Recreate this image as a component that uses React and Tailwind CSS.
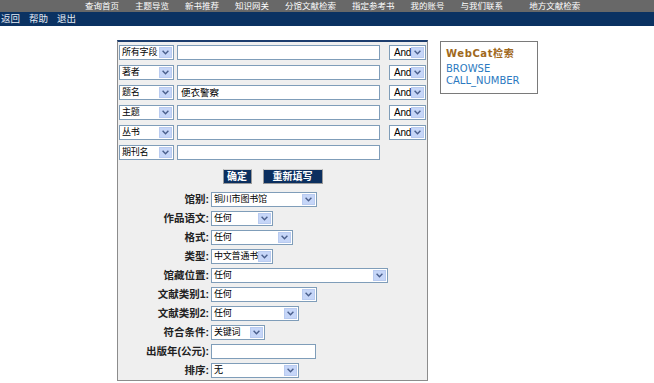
import React from 'react';

const cjk = "font-['Liberation_Sans','Noto_Sans_CJK_SC',sans-serif]";

// dropdown button used by every fake select
function Arrow() {
  return (
    <span className="flex h-full w-[13px] shrink-0 items-center justify-center border border-[#b9cbf0] bg-[#c6d6f8]">
      <svg width="7" height="5" viewBox="0 0 7 5">
        <path d="M0.6 0.8 L3.5 3.8 L6.4 0.8" stroke="#4a5f8c" strokeWidth="1.4" fill="none" />
      </svg>
    </span>
  );
}

function Select({ value, className }) {
  return (
    <div className={`flex h-[15px] items-center border border-[#7f9db9] bg-white p-[1px] ${className}`}>
      <span className="flex-1 whitespace-nowrap pl-[1px] text-[9px] leading-none tracking-[-0.2px] text-black">{value}</span>
      <Arrow />
    </div>
  );
}

function Input({ value = '', className }) {
  return (
    <div className={`flex h-[15px] items-center border border-[#7f9db9] bg-white pl-[3px] text-[9.5px] leading-none ${className}`}>
      {value}
    </div>
  );
}

const navItems = ['查询首页', '主题导览', '新书推荐', '知识网关', '分馆文献检索', '指定参考书', '我的账号', '与我们联系'];

const fieldRows = [
  { field: '所有字段', value: '', and: true },
  { field: '著者', value: '', and: true },
  { field: '题名', value: '便衣警察', and: true },
  { field: '主题', value: '', and: true },
  { field: '丛书', value: '', and: true },
  { field: '期刊名', value: '', and: false },
];

const filterRows = [
  { label: '馆别:', control: <Select value="铜川市图书馆" className="w-[106px]" /> },
  { label: '作品语文:', control: <Select value="任何" className="w-[62px]" /> },
  { label: '格式:', control: <Select value="任何" className="w-[82px]" /> },
  { label: '类型:', control: <Select value="中文普通书" className="w-[62px]" /> },
  { label: '馆藏位置:', control: <Select value="任何" className="w-[177px]" /> },
  { label: '文献类别1:', control: <Select value="任何" className="w-[106px]" /> },
  { label: '文献类别2:', control: <Select value="任何" className="w-[88px]" /> },
  { label: '符合条件:', control: <Select value="关键词" className="w-[54px]" /> },
  { label: '出版年(公元):', control: <Input className="w-[105px]" /> },
  { label: '排序:', control: <Select value="无" className="w-[88px]" /> },
];

export default function App() {
  return (
    <div className={`h-[383px] w-[654px] overflow-hidden bg-white ${cjk}`}>
      {/* top menu */}
      <div className="flex h-[12px] items-center bg-[#686868] pl-[85px] text-[8.5px] leading-none text-white">
        <div className="flex gap-[16px]">
          {navItems.map((n) => (
            <span key={n}>{n}</span>
          ))}
        </div>
        <span className="ml-[26px]">地方文献检索</span>
      </div>
      <div className="flex h-[14px] items-center gap-[9px] bg-[#0b3262] pl-[1px] text-[9.5px] leading-none text-[#e6ebf3]">
        <span>返回</span>
        <span>帮助</span>
        <span>退出</span>
      </div>

      <div className="mt-[14px] flex items-start">
        {/* search panel */}
        <div className="ml-[117px] h-[341px] w-[311px] border border-t-2 border-[#8c8c8c] border-t-[#1c3d6e] bg-[#efefef]">
          <div className="flex flex-col gap-[5px] pl-[1px] pt-[3px]">
            {fieldRows.map((r) => (
              <div key={r.field} className="flex items-center">
                <Select value={r.field} className="w-[55px]" />
                <Input value={r.value} className="ml-[3px] w-[203px]" />
                {r.and && <Select value={<span className="pl-[2px] font-['Liberation_Sans'] text-[10px]">And</span>} className="ml-[9px] w-[37px]" />}
              </div>
            ))}
          </div>

          <div className="mt-[9px] flex justify-center gap-[11px] text-[10px] font-bold leading-none text-white">
            <span className="flex h-[15px] w-[29px] items-center justify-center border border-[#9a9a9a] border-t-[#d0d0d0] bg-[#0b2f5f]">确定</span>
            <span className="flex h-[15px] w-[60px] items-center justify-center border border-[#9a9a9a] border-t-[#d0d0d0] bg-[#0b2f5f]">重新填写</span>
          </div>

          <div className="mt-[8px] flex flex-col gap-[4px]">
            {filterRows.map((r) => (
              <div key={r.label} className="flex items-center">
                <span className="w-[91px] text-right text-[10.5px] font-bold leading-none text-[#222]">{r.label}</span>
                <div className="ml-[2px]">{r.control}</div>
              </div>
            ))}
          </div>
        </div>

        {/* side box */}
        <div className="ml-[12px] mt-[1px] flex h-[53px] w-[98px] flex-col border border-[#7a7a7a] bg-white pl-[5px] pt-[6px] font-['DejaVu_Sans','Noto_Sans_CJK_SC',sans-serif] text-[10px] leading-[12px]">
          <span className="font-bold tracking-[0.6px] text-[#a0681c]">WebCat检索</span>
          <span className="mt-[3px] text-[#2b79c0]">BROWSE</span>
          <span className="text-[#2b79c0]">CALL_NUMBER</span>
        </div>
      </div>
    </div>
  );
}
